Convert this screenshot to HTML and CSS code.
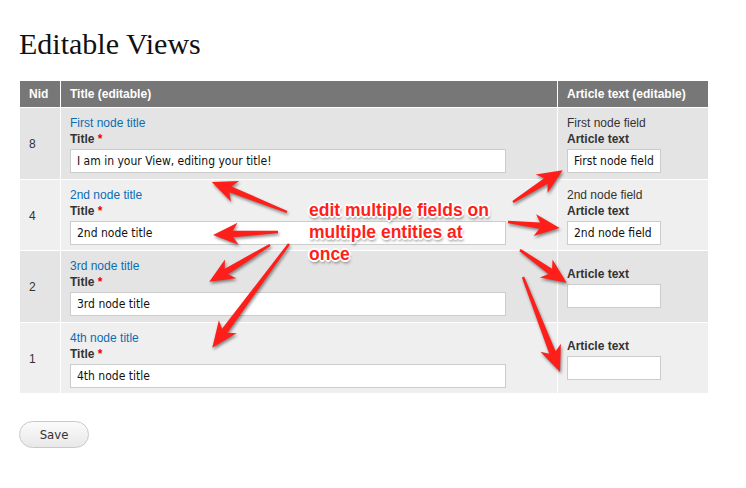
FILE: index.html
```html
<!DOCTYPE html>
<html lang="en">

<head>
  <title>Editable Views</title>
  <link rel="stylesheet" href="styles.css">
</head>

<body>
  <div class="page">
    <h1 class="page-title">Editable Views</h1>

    <table class="views-table">
      <colgroup>
        <col class="col-nid">
        <col class="col-title">
        <col class="col-article">
      </colgroup>
      <thead>
        <tr>
          <th>Nid</th>
          <th>Title (editable)</th>
          <th>Article text (editable)</th>
        </tr>
      </thead>
      <tbody>
        <tr class="odd">
          <td class="nid">8</td>
          <td>
            <a href="#" class="node-link">First node title</a>
            <label class="field-label">Title <span class="required">*</span></label>
            <input type="text" class="form-text title-input" value="I am in your View, editing your title!">
          </td>
          <td>
            <div class="field-value">First node field</div>
            <label class="field-label">Article text</label>
            <input type="text" class="form-text article-input" value="First node field">
          </td>
        </tr>
        <tr class="even">
          <td class="nid">4</td>
          <td>
            <a href="#" class="node-link">2nd node title</a>
            <label class="field-label">Title <span class="required">*</span></label>
            <input type="text" class="form-text title-input" value="2nd node title">
          </td>
          <td>
            <div class="field-value">2nd node field</div>
            <label class="field-label">Article text</label>
            <input type="text" class="form-text article-input" value="2nd node field">
          </td>
        </tr>
        <tr class="odd">
          <td class="nid">2</td>
          <td>
            <a href="#" class="node-link">3rd node title</a>
            <label class="field-label">Title <span class="required">*</span></label>
            <input type="text" class="form-text title-input" value="3rd node title">
          </td>
          <td class="article-middle">
            <label class="field-label">Article text</label>
            <input type="text" class="form-text article-input" value="">
          </td>
        </tr>
        <tr class="even last">
          <td class="nid">1</td>
          <td>
            <a href="#" class="node-link">4th node title</a>
            <label class="field-label">Title <span class="required">*</span></label>
            <input type="text" class="form-text title-input" value="4th node title">
          </td>
          <td class="article-middle">
            <label class="field-label">Article text</label>
            <input type="text" class="form-text article-input" value="">
          </td>
        </tr>
      </tbody>
    </table>

    <div class="form-actions">
      <button type="button" class="form-submit">Save</button>
    </div>

    <!-- annotation arrows drawn over the table -->
    <svg class="arrows" width="746" height="488" viewBox="0 0 746 488">
      <g fill="#ff1f1a">
        <polygon transform="translate(287 212) rotate(-158.2)" points="0,-1.2 61,-3.2 56,-11 81,0 56,11 61,3.2 0,1.2" />
        <polygon transform="translate(278 232) rotate(177.4)" points="0,-1.2 45,-3.2 40,-11 65,0 40,11 45,3.2 0,1.2" />
        <polygon transform="translate(270 245) rotate(148.8)" points="0,-1.2 51,-3.2 46,-11 71,0 46,11 51,3.2 0,1.2" />
        <polygon transform="translate(289 244) rotate(126.5)" points="0,-1.2 108,-3.4 103,-11 129,0 103,11 108,3.4 0,1.2" />
        <polygon transform="translate(513 202) rotate(-32.6)" points="0,-1.2 39,-3.2 34,-11 59,0 34,11 39,3.2 0,1.2" />
        <polygon transform="translate(508 222) rotate(6.6)" points="0,-1.2 32,-3.2 27,-11 52,0 27,11 32,3.2 0,1.2" />
        <polygon transform="translate(520 250) rotate(35.1)" points="0,-1.2 37,-3.2 32,-11 57,0 32,11 37,3.2 0,1.2" />
        <polygon transform="translate(523 277) rotate(68.7)" points="0,-1.2 81,-3.4 76,-11 102,0 76,11 81,3.4 0,1.2" />
      </g>
    </svg>

    <div class="callout">edit multiple fields on<br>multiple entities at<br>once</div>
  </div>
</body>

</html>
```

FILE: styles.css
```css
body {
  margin: 0;
  background-color: #fff;
  font-family: "Liberation Sans", Arial, sans-serif;
  color: #333;
}

.page {
  position: relative;
  width: 746px;
  height: 488px;
  padding: 26px 20px 0 20px;
  box-sizing: border-box;
}

.page-title {
  margin: 0 0 19px -1px;
  font-family: "Liberation Serif", "Times New Roman", serif;
  font-weight: normal;
  font-size: 30px;
  line-height: 36px;
  color: #111;
}

.views-table {
  width: 688px;
  table-layout: fixed;
  border-collapse: separate;
  border-spacing: 0;
  font-size: 12px;
}

.col-nid {
  width: 41px;
}

.col-title {
  width: 497px;
}

.col-article {
  width: 150px;
}

.views-table th {
  height: 26px;
  padding: 0 9px;
  background-color: #777;
  color: #fff;
  font-weight: bold;
  text-align: left;
  border-right: 1px solid #fff;
  border-bottom: 1px solid #fff;
}

.views-table th:last-child,
.views-table td:last-child {
  border-right: 0;
}

.views-table td {
  padding: 7px 9px 5.5px 9px;
  vertical-align: top;
  border-right: 1px solid #fff;
  border-bottom: 1px solid #fff;
  line-height: 16px;
}

.views-table tr.odd td {
  background-color: #e4e4e4;
}

.views-table tr.even td {
  background-color: #efefef;
}

.views-table tr.last td {
  border-bottom: 0;
}

.views-table td.nid,
.views-table td.article-middle {
  vertical-align: middle;
}

.node-link {
  display: block;
  color: #0b6db3;
  text-decoration: none;
}

.field-value {
  color: #333;
}

.field-label {
  display: block;
  line-height: 16px;
  font-weight: bold;
  color: #333;
}

.required {
  color: #e00;
}

.form-text {
  display: block;
  height: 24px;
  margin-top: 2px;
  padding: 0 6px;
  box-sizing: border-box;
  border: 1px solid #ccc;
  background-color: #fff;
  font-family: "DejaVu Sans Condensed", "DejaVu Sans", sans-serif;
  font-stretch: condensed;
  font-size: 12px;
  color: #111;
  outline: none;
}

.title-input {
  width: 436px;
}

.article-input {
  width: 94px;
}

.form-actions {
  margin-top: 28px;
}

.form-submit {
  width: 70px;
  height: 27px;
  margin-left: -1px;
  border: 1px solid #c8c8c8;
  border-radius: 14px;
  background: linear-gradient(#fbfbfb, #e8e8e8);
  font-family: "DejaVu Sans Condensed", "DejaVu Sans", sans-serif;
  font-stretch: condensed;
  font-size: 13px;
  color: #333;
}

.arrows {
  position: absolute;
  top: 0;
  left: 0;
  pointer-events: none;
  filter: drop-shadow(1px 2px 1.5px rgba(0, 0, 0, 0.45));
}

.callout {
  position: absolute;
  top: 199px;
  left: 309px;
  font-weight: bold;
  font-size: 17.5px;
  line-height: 22px;
  color: #ff1f1a;
  text-shadow:
    -1px -1px 0 #fff, 1px -1px 0 #fff, -1px 1px 0 #fff, 1px 1px 0 #fff,
    0 -2px 0 #fff, 0 2px 0 #fff, -2px 0 0 #fff, 2px 0 0 #fff,
    1px 3px 3px rgba(0, 0, 0, 0.5);
}
```
